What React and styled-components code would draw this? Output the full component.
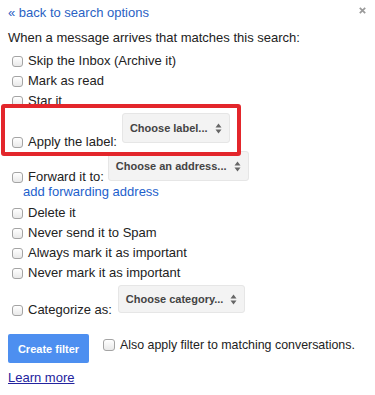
import React from "react";
import styled, { createGlobalStyle } from "styled-components";

const Global = createGlobalStyle`
  html, body { margin: 0; padding: 0; background: #fff; }
  body { font-family: "Liberation Sans", Arial, sans-serif; font-size: 13px; color: #222; }
`;

const Panel = styled.div`
  width: 375px;
  height: 395px;
  box-sizing: border-box;
  padding: 5px 8px 0 8px;
  overflow: hidden;
`;

const Header = styled.div`
  display: flex;
  justify-content: space-between;
  align-items: flex-start;
  height: 16px;
`;

const Link = styled.a`
  color: ${(p) => p.$color || "#1155cc"};
  text-decoration: ${(p) => (p.$underline ? "underline" : "none")};
  line-height: 16px;
  cursor: pointer;
  display: inline-block;
`;

const Close = styled.svg`
  margin-top: 2px;
  margin-right: 1px;
  width: 7px;
  height: 7px;
`;

const Intro = styled.div`
  margin-top: 9px;
  line-height: 16px;
  margin-bottom: 5px;
`;

const Row = styled.label`
  display: flex;
  align-items: center;
  gap: 5px;
  height: 20px;
  line-height: 20px;
  position: relative;
  z-index: 1;
`;

const Box = styled.span`
  display: inline-block;
  box-sizing: border-box;
  width: ${(p) => p.$size || 11}px;
  height: ${(p) => p.$size || 11}px;
  margin-left: ${(p) => (p.$flush ? 0 : 4)}px;
  border: 1px solid #a4a4a4;
  border-radius: 3px;
  background: linear-gradient(#ffffff, #e9e9e9);
  flex: none;
`;

const Highlight = styled.div`
  position: relative;
  z-index: 3;
  margin: -7px 0 0 -7px;
  width: 240px;
  box-sizing: border-box;
  border: 4px solid #e3262b;
  border-radius: 3px;
  background: #fff;
  padding: 5px 0 2px 3px;
`;

const SelectRow = styled.div`
  display: flex;
  align-items: flex-end;
  margin-top: ${(p) => p.$mt || 0}px;
  position: relative;
  z-index: ${(p) => p.$z || 1};
`;

const RowLabel = styled.span`
  display: flex;
  align-items: center;
  gap: 5px;
  line-height: 16px;
  height: 16px;
`;

const Select = styled.div`
  display: flex;
  align-items: center;
  gap: 7px;
  height: ${(p) => p.$h || 30}px;
  box-sizing: border-box;
  margin-left: ${(p) => p.$ml || 5}px;
  margin-bottom: ${(p) => p.$mb || 4}px;
  padding: 0 7px 0 7px;
  background: #f3f3f3;
  border: 1px solid #e6e6e6;
  border-radius: 3px;
  font-weight: bold;
  font-size: 11px;
  color: #444;
`;

const Arrows = styled.svg`
  width: 7px;
  height: 11px;
`;

const SubLink = styled.div`
  margin: -1px 0 3px 15px;
  line-height: 16px;
`;

const Footer = styled.div`
  display: flex;
  align-items: flex-start;
  margin-top: 16px;
`;

const Button = styled.button`
  width: 81px;
  height: 29px;
  border: none;
  border-radius: 2px;
  background: #4d8ff0;
  color: #fff;
  font-family: "Liberation Sans", Arial, sans-serif;
  font-weight: bold;
  font-size: 11px;
  padding: 0;
  cursor: pointer;
`;

const AlsoLabel = styled.label`
  display: flex;
  align-items: center;
  gap: 5px;
  margin: 3px 0 0 14px;
  line-height: 16px;
  font-size: 12.4px;
`;

const Bottom = styled.div`
  margin-top: 7px;
`;

const Caret = () => (
  <Arrows viewBox="0 0 7 11">
    <path d="M3.5 0.5 L6.5 4.5 L0.5 4.5 Z M3.5 10.5 L6.5 6.5 L0.5 6.5 Z" fill="#666" />
  </Arrows>
);

const Check = ({ children }) => (
  <Row>
    <Box />
    {children}
  </Row>
);

export default function App() {
  return (
    <>
      <Global />
      <Panel>
        <Header>
          <Link $color="#2a62c4">« back to search options</Link>
          <Close viewBox="0 0 7 7">
            <path d="M0.8 0.8 L6.2 6.2 M6.2 0.8 L0.8 6.2" stroke="#9a9a9a" strokeWidth="1.7" />
          </Close>
        </Header>
        <Intro>When a message arrives that matches this search:</Intro>
        <Check>Skip the Inbox (Archive it)</Check>
        <Check>Mark as read</Check>
        <Check>Star it</Check>
        <Highlight>
          <SelectRow>
            <RowLabel>
              <Box />
              Apply the label:
            </RowLabel>
            <Select $mb={7}>
              Choose label... <Caret />
            </Select>
          </SelectRow>
        </Highlight>
        <SelectRow $mt={-5}>
          <RowLabel>
            <Box />
            Forward it to:
          </RowLabel>
          <Select $ml={4} $mb={4}>
            Choose an address... <Caret />
          </Select>
        </SelectRow>
        <SubLink>
          <Link $color="#1d5fcc">add forwarding address</Link>
        </SubLink>
        <Check>Delete it</Check>
        <Check>Never send it to Spam</Check>
        <Check>Always mark it as important</Check>
        <Check>Never mark it as important</Check>
        <SelectRow $mt={2}>
          <RowLabel>
            <Box />
            Categorize as:
          </RowLabel>
          <Select $ml={6} $h={28} $mb={5}>
            Choose category... <Caret />
          </Select>
        </SelectRow>
        <Footer>
          <Button>Create filter</Button>
          <AlsoLabel>
            <Box $flush $size={12} />
            Also apply filter to matching conversations.
          </AlsoLabel>
        </Footer>
        <Bottom>
          <Link $color="#23239e" $underline>Learn more</Link>
        </Bottom>
      </Panel>
    </>
  );
}
